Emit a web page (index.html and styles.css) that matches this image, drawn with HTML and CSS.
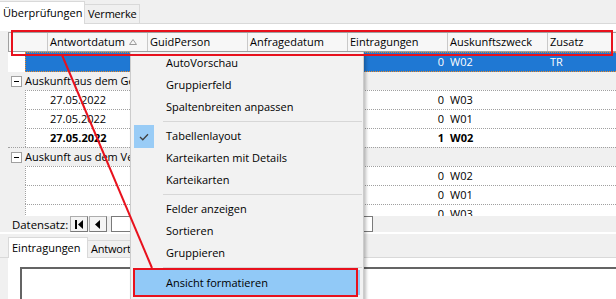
FILE: index.html
```html
<!DOCTYPE html>
<html>
<head>
    <title>Überprüfungen</title>
    <meta charset="utf-8">
    <link rel="stylesheet" href="styles.css">
</head>
<body>
    <div class="tabstrip">
        <div class="tab tab-active">Überprüfungen</div>
        <div class="tab">Vermerke</div>
    </div>
    <div class="page">
        <div class="grid-area">
            <div class="grid">
                <div class="grid-head">
                    <div class="hcell hcell-ind"></div>
                    <div class="hcell">Antwortdatum <svg class="sort" width="8" height="6" viewBox="0 0 8 6"><path d="M4 0.5 L7.5 5.5 L0.5 5.5 Z" fill="none" stroke="#9a9a9a"/></svg></div>
                    <div class="hcell">GuidPerson</div>
                    <div class="hcell">Anfragedatum</div>
                    <div class="hcell">Eintragungen</div>
                    <div class="hcell">Auskunftszweck</div>
                    <div class="hcell">Zusatz</div>
                </div>
                <div class="grid-body">
                    <div class="row row-sel">
                        <div class="indent"></div>
                        <div class="cells">
                            <div class="cell cell-gap"></div>
                            <div class="cell"></div>
                            <div class="cell"></div>
                            <div class="cell"></div>
                            <div class="cell cell-num">0</div>
                            <div class="cell">W02</div>
                            <div class="cell">TR</div>
                        </div>
                    </div>
                    <div class="group">
                        <span class="toggle"></span>Auskunft aus dem Gewerbezentralregister
                    </div>
                    <div class="row">
                        <div class="indent"></div>
                        <div class="cells">
                            <div class="cell cell-gap"></div>
                            <div class="cell">27.05.2022</div>
                            <div class="cell"></div>
                            <div class="cell"></div>
                            <div class="cell cell-num">0</div>
                            <div class="cell">W03</div>
                            <div class="cell"></div>
                        </div>
                    </div>
                    <div class="row">
                        <div class="indent"></div>
                        <div class="cells">
                            <div class="cell cell-gap"></div>
                            <div class="cell">27.05.2022</div>
                            <div class="cell"></div>
                            <div class="cell"></div>
                            <div class="cell cell-num">0</div>
                            <div class="cell">W01</div>
                            <div class="cell"></div>
                        </div>
                    </div>
                    <div class="row row-bold">
                        <div class="indent"></div>
                        <div class="cells">
                            <div class="cell cell-gap"></div>
                            <div class="cell">27.05.2022</div>
                            <div class="cell"></div>
                            <div class="cell"></div>
                            <div class="cell cell-num">1</div>
                            <div class="cell">W02</div>
                            <div class="cell"></div>
                        </div>
                    </div>
                    <div class="group">
                        <span class="toggle"></span>Auskunft aus dem Verkehrszentralregister
                    </div>
                    <div class="row">
                        <div class="indent"></div>
                        <div class="cells">
                            <div class="cell cell-gap"></div>
                            <div class="cell"></div>
                            <div class="cell"></div>
                            <div class="cell"></div>
                            <div class="cell cell-num">0</div>
                            <div class="cell">W02</div>
                            <div class="cell"></div>
                        </div>
                    </div>
                    <div class="row">
                        <div class="indent"></div>
                        <div class="cells">
                            <div class="cell cell-gap"></div>
                            <div class="cell"></div>
                            <div class="cell"></div>
                            <div class="cell"></div>
                            <div class="cell cell-num">0</div>
                            <div class="cell">W01</div>
                            <div class="cell"></div>
                        </div>
                    </div>
                    <div class="row">
                        <div class="indent"></div>
                        <div class="cells">
                            <div class="cell cell-gap"></div>
                            <div class="cell"></div>
                            <div class="cell"></div>
                            <div class="cell"></div>
                            <div class="cell cell-num">0</div>
                            <div class="cell">W03</div>
                            <div class="cell"></div>
                        </div>
                    </div>
                </div>
                <div class="navbar">
                    <span class="nav-label">Datensatz:</span>
                    <span class="nav-btn"><svg width="10" height="9" viewBox="0 0 10 9"><rect x="1" y="0" width="2" height="9" fill="#000"/><path d="M9 0 L4 4.5 L9 9 Z" fill="#000"/></svg></span>
                    <span class="nav-btn"><svg width="10" height="9" viewBox="0 0 10 9"><path d="M7 0 L2 4.5 L7 9 Z" fill="#000"/></svg></span>
                    <span class="nav-input"></span>
                </div>
            </div>
        </div>
    </div>
    <div class="tabstrip tabstrip-lower">
        <div class="tab tab-active">Eintragungen</div>
        <div class="tab">Antwortschreiben</div>
    </div>
    <div class="page page-lower">
        <div class="textbox"></div>
    </div>

    <div class="menu">
        <div class="menu-item">AutoVorschau</div>
        <div class="menu-item">Gruppierfeld</div>
        <div class="menu-item">Spaltenbreiten anpassen</div>
        <div class="menu-sep"></div>
        <div class="menu-item menu-checked">Tabellenlayout</div>
        <div class="menu-item">Karteikarten mit Details</div>
        <div class="menu-item">Karteikarten</div>
        <div class="menu-sep"></div>
        <div class="menu-item">Felder anzeigen</div>
        <div class="menu-item">Sortieren</div>
        <div class="menu-item">Gruppieren</div>
        <div class="menu-sep"></div>
        <div class="menu-item menu-hover">Ansicht formatieren</div>
    </div>

    <div class="mark mark-head"></div>
    <div class="mark mark-item"></div>
    <svg class="pointer" width="616" height="299" viewBox="0 0 616 299">
        <line x1="62" y1="55" x2="152" y2="268" stroke="#e8111d" stroke-width="2"/>
    </svg>
</body>
</html>
```

FILE: styles.css
```css
body {
    margin: 0;
    width: 616px;
    height: 299px;
    overflow: hidden;
    position: relative;
    background-color: #f0f0f0;
    font-family: "Open Sans", "Liberation Sans", sans-serif;
    font-size: 11px;
    color: #000;
}

/* tabs */
.tabstrip {
    display: flex;
    align-items: flex-end;
    height: 23px;
    border-bottom: 1px solid #d9d9d9;
}
.tab {
    height: 18px;
    line-height: 17px;
    padding: 0 3px;
    border: 1px solid #d9d9d9;
    border-bottom: none;
    border-left: none;
    background-color: #f0f0f0;
    letter-spacing: -0.2px;
}
.tab-active {
    width: 78px;
    padding: 0 3px;
    line-height: 21px;
    background-color: #fff;
    margin-bottom: -1px;
    height: 22px;
    letter-spacing: 0;
}

.page {
    background-color: #fff;
    padding-top: 7px;
    border-bottom: 1px solid #fff;
}
.grid-area {
    background-color: #f0f0f0;
    padding: 1px 0 0 8px;
}

/* grid */
.grid {
    width: 700px;
}
.grid-head {
    display: grid;
    grid-template-columns: 38px repeat(6, 100px);
    height: 18px;
    border: 1px solid #a0a0a0;
    border-right: none;
    background-color: #f7f7f7;
}
.hcell {
    border-left: 1px solid #c9c9c9;
    padding-left: 2px;
    line-height: 18px;
    white-space: nowrap;
}
.hcell-ind {
    border-left: none;
}
.sort {
    margin-left: 1px;
    vertical-align: 1px;
}

.grid-body {
    height: 164px;
    overflow: hidden;
}
.row {
    display: flex;
    height: 19px;
}
.indent {
    width: 17px;
    flex: none;
}
.cells {
    flex: 1;
    display: grid;
    grid-template-columns: 21px repeat(6, 100px);
    background-color: #fff;
    border-left: 1px dotted #a0a0a0;
    border-top: 1px dotted #a0a0a0;
    line-height: 18px;
    white-space: nowrap;
}
.cell {
    padding-left: 3px;
}
.cell-gap {
    padding: 0;
}
.cell-num {
    text-align: right;
    padding: 0 3px 0 0;
}
.row-bold {
    font-weight: bold;
}
.row-bold + .group {
    border-top: 1px dotted #a0a0a0;
}
.row-sel {
    height: 20px;
}
.row-sel .indent {
    background-color: #fff;
}
.row-sel .cells {
    background-color: #1f78d3;
    color: #fff;
    border: 1px dotted #f08a24;
    border-right: none;
}

.group {
    height: 18px;
    line-height: 18px;
    display: flex;
    align-items: center;
    white-space: nowrap;
}
.toggle {
    width: 9px;
    height: 9px;
    margin: 0 3px 0 3px;
    border: 1px solid #a0a0a0;
    background: #fff linear-gradient(#000, #000) center / 5px 1px no-repeat;
}

.navbar {
    display: flex;
    align-items: center;
    height: 16px;
    padding-left: 4px;
    font-size: 11.4px;
}
.nav-label {
    width: 58px;
}
.nav-btn {
    width: 16px;
    height: 14px;
    margin-right: 1px;
    display: flex;
    align-items: center;
    justify-content: center;
    background-color: #f4f4f4;
    border: 1px solid #adadad;
    border-right-color: #7a7a7a;
    border-bottom-color: #7a7a7a;
}
.nav-input {
    width: 260px;
    height: 14px;
    margin-left: 3px;
    background-color: #fff;
    border: 1px solid #7a7a7a;
}

.tabstrip-lower {
    padding-left: 8px;
    height: 23px;
    border-top: 1px solid #fff;
    border-bottom-color: #d9d9d9;
}
.tabstrip-lower .tab {
    height: 16px;
    line-height: 16px;
}
.tabstrip-lower .tab-active {
    width: 72px;
    height: 20px;
    line-height: 19px;
    border-left: 1px solid #d9d9d9;
}
.page-lower {
    height: 60px;
    margin-left: 8px;
    padding: 9px 0 0 12px;
}
.textbox {
    height: 60px;
    border: 2px solid #646464;
    border-right: none;
    background-color: #fff;
}

/* context menu */
.menu {
    position: absolute;
    left: 130px;
    top: 52px;
    width: 230px;
    height: 260px;
    padding: 0 1px;
    background-color: #f2f2f2;
    border: 1px solid #cccccc;
    border-top: none;
    box-shadow: 2px 2px 3px rgba(0, 0, 0, 0.25);
}
.menu-item {
    height: 22px;
    line-height: 22px;
    padding-left: 34px;
    white-space: nowrap;
    position: relative;
}
.menu-sep {
    height: 7px;
    margin-left: 31px;
    background: linear-gradient(#d7d7d7, #d7d7d7) 0 3px / 100% 1px no-repeat;
}
.menu-checked::before {
    content: "";
    position: absolute;
    left: 2px;
    top: 0;
    width: 20px;
    height: 23px;
    background: #99ccf6 url("data:image/svg+xml,%3Csvg xmlns='http://www.w3.org/2000/svg' width='10' height='8'%3E%3Cpath d='M1 4 L3.8 6.8 L9 1.2' fill='none' stroke='%23404040' stroke-width='1.3'/%3E%3C/svg%3E") center no-repeat;
}
.menu-hover {
    background-color: #91c9f7;
    margin: -1px 2px 0;
    padding-left: 32px;
    height: 25px;
    line-height: 25px;
}

/* annotations */
.mark {
    position: absolute;
    border: 2px solid #e8111d;
}
.mark-head {
    left: 11px;
    top: 30px;
    width: 598px;
    height: 22px;
}
.mark-item {
    left: 133px;
    top: 268px;
    width: 221px;
    height: 25px;
}
.pointer {
    position: absolute;
    left: 0;
    top: 0;
}
```
